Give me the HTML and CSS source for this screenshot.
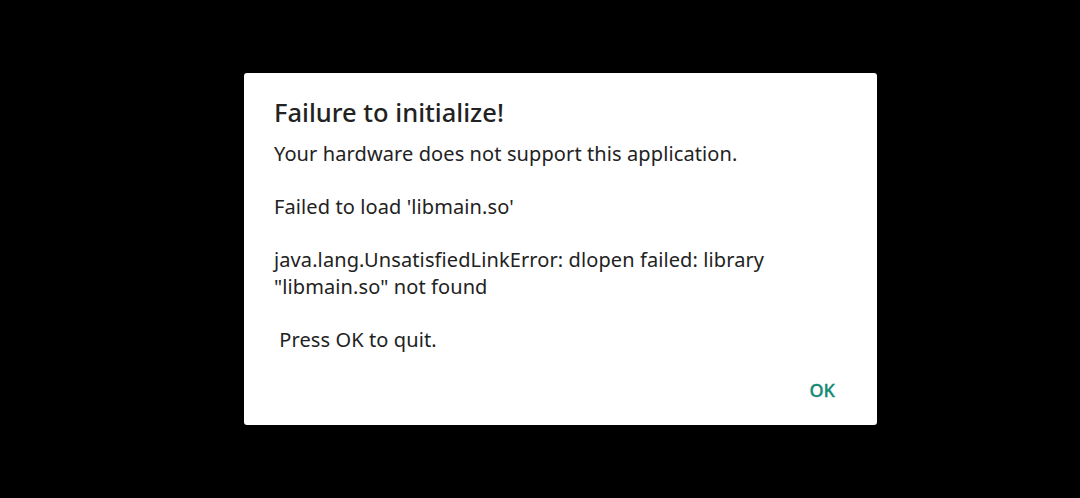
FILE: index.html
```html
<!DOCTYPE html>
<html>
<head>
<meta charset="utf-8">
<link rel="stylesheet" href="styles.css">
</head>
<body>
<div class="screen">
  <div class="dialog">
    <h1 class="title">Failure to initialize!</h1>
    <div class="message">Your hardware does not support this application.

Failed to load 'libmain.so'

java.lang.UnsatisfiedLinkError: dlopen failed: library
"libmain.so" not found

 Press OK to quit.</div>
    <div class="actions">
      <button class="btn">OK</button>
    </div>
  </div>
</div>
</body>
</html>
```

FILE: styles.css
```css
html, body {
  margin: 0;
  padding: 0;
  background: #000;
}
.screen {
  width: 1080px;
  height: 498px;
  display: flex;
  align-items: center;
  padding-left: 244px;
  box-sizing: border-box;
}
.dialog {
  width: 633px;
  height: 352px;
  background: #fff;
  border-radius: 3px;
  box-sizing: border-box;
  padding: 22px 30px 0 30px;
  display: flex;
  flex-direction: column;
  font-family: "Noto Sans", "DejaVu Sans", sans-serif;
}
.title {
  margin: 0;
  font-size: 25.5px;
  line-height: 34px;
  font-weight: 500;
  color: #222;
}
.message {
  margin-top: 12px;
  font-size: 20px;
  line-height: 26.5px;
  color: #222;
  white-space: pre-wrap;
  letter-spacing: 0.1px;
}
.actions {
  display: flex;
  justify-content: flex-end;
  margin-top: 19px;
  margin-right: 0;
}
.btn {
  border: none;
  background: none;
  padding: 6px 12px;
  font-family: "Noto Sans", "DejaVu Sans", sans-serif;
  font-size: 18px;
  font-weight: 500;
  color: #138a76;
  line-height: 24px;
  -webkit-text-stroke: 0.3px #138a76;
}
```
